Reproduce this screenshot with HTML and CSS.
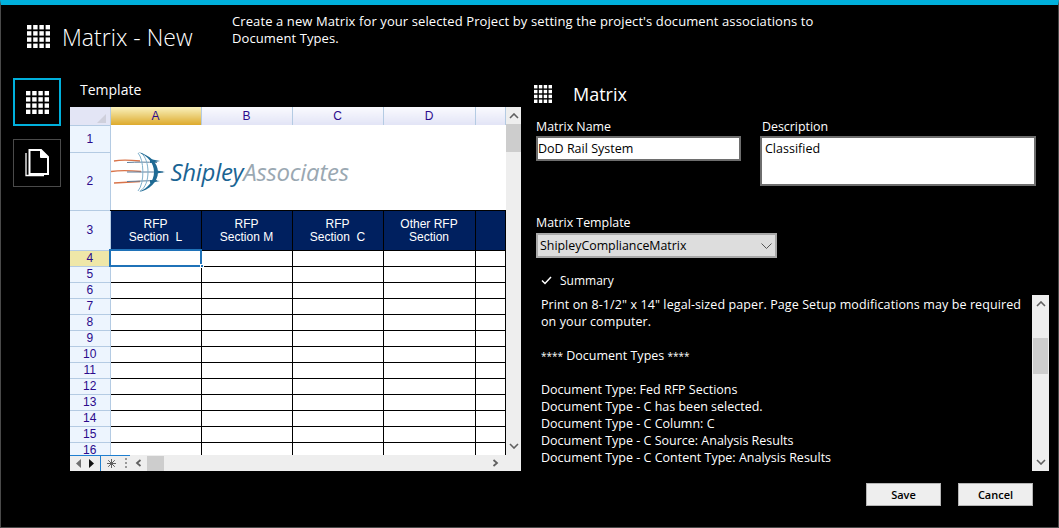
FILE: index.html
```html
<!DOCTYPE html>
<html lang="en">
<head>
    <meta charset="UTF-8">
    <title>Matrix - New</title>
    <link rel="stylesheet" href="styles.css">
</head>
<body>
    <svg class="defs" width="0" height="0">
        <symbol id="grid-icon" viewBox="0 0 23 23">
            <g fill="currentColor">
                <rect x="0" y="0" width="4.400" height="4.400"/><rect x="6.200" y="0" width="4.400" height="4.400"/><rect x="12.400" y="0" width="4.400" height="4.400"/><rect x="18.600" y="0" width="4.400" height="4.400"/>
                <rect x="0" y="6.200" width="4.400" height="4.400"/><rect x="6.200" y="6.200" width="4.400" height="4.400"/><rect x="12.400" y="6.200" width="4.400" height="4.400"/><rect x="18.600" y="6.200" width="4.400" height="4.400"/>
                <rect x="0" y="12.400" width="4.400" height="4.400"/><rect x="6.200" y="12.400" width="4.400" height="4.400"/><rect x="12.400" y="12.400" width="4.400" height="4.400"/><rect x="18.600" y="12.400" width="4.400" height="4.400"/>
                <rect x="0" y="18.600" width="4.400" height="4.400"/><rect x="6.200" y="18.600" width="4.400" height="4.400"/><rect x="12.400" y="18.600" width="4.400" height="4.400"/><rect x="18.600" y="18.600" width="4.400" height="4.400"/>
            </g>
        </symbol>
    </svg>

    <div class="window">
        <header class="top">
            <svg class="top-icon"><use href="#grid-icon"/></svg>
            <h1>Matrix - New</h1>
            <p>Create a new Matrix for your selected Project by setting the project's document associations to Document Types.</p>
        </header>

        <div class="main">
            <nav class="side">
                <div class="nav-btn active"><svg class="nav-icon"><use href="#grid-icon"/></svg></div>
                <div class="nav-btn">
                    <svg class="doc-icon" viewBox="0 0 24 28" fill="none" stroke="#fff">
                        <path d="M4.500 1h11.500l7 7v17h-18.500z" stroke-width="2"/>
                        <path d="M15.500 1v7.500h7.500z" fill="#fff" stroke-width="1"/>
                        <path d="M1 4v22.500h18" stroke-width="1.300"/>
                    </svg>
                </div>
            </nav>

            <section class="left">
                <h2 class="template-title">Template</h2>
                <div class="sheet">
                    <div class="sheet-body">
                        <table class="cells">
                            <colgroup>
                                <col class="c-head"><col class="c-col"><col class="c-col"><col class="c-col"><col class="c-col4"><col class="c-rest">
                            </colgroup>
                            <tr class="col-heads">
                                <th class="corner"><span class="corner-mark"></span></th>
                                <th class="selected">A</th><th>B</th><th>C</th><th>D</th><th></th>
                            </tr>
                            <tr class="r1"><td class="rh">1</td>
                                <td class="logo-cell" colspan="5" rowspan="2">
                                    <div class="logo">
                                        <svg class="globe" width="56" height="40" viewBox="0 0 56 40" fill="none">
                                            <path d="M3 9c8-1.500 16-1 26 0M0 19.500c10-1.500 20-1 30 0M3 31c8-.500 16-1 26-1.500" stroke="#d9744a" stroke-width="1.400"/>
                                            <path d="M16 10.500c10-.500 20-.500 30 0M16 20h36M16 29.500c10-.500 20-.500 30-1" stroke="#5f7f9c" stroke-width="1"/>
                                            <path d="M27 1c6 6 7 30 0 38" stroke="#7fb0cc" stroke-width="1"/>
                                            <path d="M30 1c9 6 10 32-1 38" stroke="#7fb0cc" stroke-width="1"/>
                                            <path d="M27 0c12 3 20 11 20 20c0 10-9 18-19 20c9-4 15-11 15-20c0-9-6-16-16-20z" fill="#1f6a94"/>
                                            <path d="M39 7l10 2-10 2zM43 18l11 2-11 2zM39 28l10 1-10 2z" fill="#1f6a94"/>
                                        </svg>
                                        <span class="logo-text"><span class="logo-blue">Shipley</span><span class="logo-gray">Associates</span></span>
                                    </div>
                                </td>
                            </tr>
                            <tr class="r2"><td class="rh">2</td></tr>
                            <tr class="r3"><td class="rh">3</td>
                                <td class="navy">RFP<br>Section&nbsp; L</td><td class="navy">RFP<br>Section M</td><td class="navy">RFP<br>Section&nbsp; C</td><td class="navy">Other RFP<br>Section</td><td class="navy"></td>
                            </tr>
                            <tr class="row"><td class="rh rh-sel">4</td><td class="cur"><span class="cur-handle"></span></td><td></td><td></td><td></td><td></td></tr>
                            <tr class="row"><td class="rh">5</td><td></td><td></td><td></td><td></td><td></td></tr>
                            <tr class="row"><td class="rh">6</td><td></td><td></td><td></td><td></td><td></td></tr>
                            <tr class="row"><td class="rh">7</td><td></td><td></td><td></td><td></td><td></td></tr>
                            <tr class="row"><td class="rh">8</td><td></td><td></td><td></td><td></td><td></td></tr>
                            <tr class="row"><td class="rh">9</td><td></td><td></td><td></td><td></td><td></td></tr>
                            <tr class="row"><td class="rh">10</td><td></td><td></td><td></td><td></td><td></td></tr>
                            <tr class="row"><td class="rh">11</td><td></td><td></td><td></td><td></td><td></td></tr>
                            <tr class="row"><td class="rh">12</td><td></td><td></td><td></td><td></td><td></td></tr>
                            <tr class="row"><td class="rh">13</td><td></td><td></td><td></td><td></td><td></td></tr>
                            <tr class="row"><td class="rh">14</td><td></td><td></td><td></td><td></td><td></td></tr>
                            <tr class="row"><td class="rh">15</td><td></td><td></td><td></td><td></td><td></td></tr>
                            <tr class="row"><td class="rh">16</td><td></td><td></td><td></td><td></td><td></td></tr>
                        </table>
                        <div class="v-scroll">
                            <svg class="arrow" viewBox="0 0 10 6"><path d="M1 5l4-4 4 4" fill="none" stroke="#606060" stroke-width="1.600"/></svg>
                            <div class="v-thumb"></div>
                            <svg class="arrow arrow-end" viewBox="0 0 10 6"><path d="M1 1l4 4 4-4" fill="none" stroke="#606060" stroke-width="1.600"/></svg>
                        </div>
                    </div>
                    <div class="sheet-foot">
                        <div class="tab-nav">
                            <svg width="6" height="9" viewBox="0 0 6 9"><path d="M5 0v9L0 4.500z" fill="#707070"/></svg>
                            <svg width="6" height="9" viewBox="0 0 6 9"><path d="M0 0v9l5-4.500z" fill="#111"/></svg>
                        </div>
                        <div class="tab-new">
                            <svg width="9" height="9" viewBox="0 0 9 9" stroke="#606060" stroke-width="1"><path d="M4.500 0v9M0 4.500h9M1.200 1.200l6.600 6.600M7.800 1.200L1.200 7.800"/></svg>
                        </div>
                        <span class="tab-dots"></span>
                        <svg class="h-arrow" width="7" height="8" viewBox="0 0 7 8"><path d="M5.500 1L2 4l3.500 3" fill="none" stroke="#606060" stroke-width="1.800"/></svg>
                        <div class="h-thumb"></div>
                        <svg class="h-arrow h-arrow-end" width="7" height="8" viewBox="0 0 7 8"><path d="M1.500 1L5 4 1.500 7" fill="none" stroke="#606060" stroke-width="1.800"/></svg>
                    </div>
                </div>
            </section>

            <section class="right">
                <div class="matrix-head">
                    <svg class="matrix-icon"><use href="#grid-icon"/></svg>
                    <h2>Matrix</h2>
                </div>
                <div class="form-row">
                    <div class="field-name">
                        <label>Matrix Name</label>
                        <div class="input">DoD Rail System</div>
                    </div>
                    <div class="field-desc">
                        <label>Description</label>
                        <div class="input area">Classified</div>
                    </div>
                </div>
                <label class="tpl-label">Matrix Template</label>
                <div class="select">
                    <span>ShipleyComplianceMatrix</span>
                    <svg width="11" height="6" viewBox="0 0 11 6"><path d="M.5.500l5 5 5-5" fill="none" stroke="#555" stroke-width="1"/></svg>
                </div>
                <div class="summary-head">
                    <svg width="11" height="9" viewBox="0 0 11 9"><path d="M1 4.500l3 3 6-6.500" fill="none" stroke="#fff" stroke-width="1.500"/></svg>
                    <span>Summary</span>
                </div>
                <div class="summary">
                    <div class="summary-text">
                        <p class="lead">Print on 8-1/2" x 14" legal-sized paper. Page Setup modifications may be required on your computer.</p>
                        <p><span class="stars">****</span> Document Types <span class="stars">****</span></p>
                        <p>Document Type: Fed RFP Sections<br>Document Type - C has been selected.<br>Document Type - C Column: C<br>Document Type - C Source: Analysis Results<br>Document Type - C Content Type: Analysis Results</p>
                    </div>
                    <div class="s-scroll">
                        <svg class="arrow" viewBox="0 0 10 6"><path d="M1 5l4-4 4 4" fill="none" stroke="#606060" stroke-width="1.600"/></svg>
                        <div class="s-thumb"></div>
                        <svg class="arrow arrow-end" viewBox="0 0 10 6"><path d="M1 1l4 4 4-4" fill="none" stroke="#606060" stroke-width="1.600"/></svg>
                    </div>
                </div>
                <div class="actions">
                    <button type="button" class="btn">Save</button>
                    <button type="button" class="btn">Cancel</button>
                </div>
            </section>
        </div>
    </div>
</body>
</html>
```
FILE: styles.css
```css
* {
    box-sizing: border-box;
}
html, body {
    margin: 0;
    padding: 0;
    height: 100%;
    background-color: #000;
}
body {
    font-family: "Open Sans", "Noto Sans", sans-serif;
    color: #fff;
    overflow: hidden;
}
.defs {
    display: block;
    height: 0;
}
.window {
    height: 528px;
    border: 1px solid #4a4a4a;
    border-top: 5px solid #00b0dc;
    background-color: #000;
}

/* header */
.top {
    display: flex;
    height: 68px;
    padding: 0 0 0 26px;
}
.top-icon {
    width: 23px;
    height: 23px;
    margin-top: 20px;
    color: #fff;
}
.top h1 {
    width: 170px;
    margin: 14px 0 0 12px;
    font-size: 23px;
    font-weight: 300;
    line-height: 36px;
}
.top p {
    width: 600px;
    margin: 8px 0 0 0;
    font-size: 13px;
    line-height: 17px;
    letter-spacing: 0.1px;
}

/* body columns */
.main {
    display: flex;
    height: 454px;
}
.side {
    width: 69px;
    padding: 5px 0 0 12px;
    flex-shrink: 0;
}
.nav-btn {
    display: flex;
    align-items: center;
    justify-content: center;
    width: 48px;
    height: 48px;
    margin-bottom: 13px;
    border: 1px solid #4a4a4a;
}
.nav-btn.active {
    border: 2px solid #00b0dc;
}
.nav-icon {
    width: 23px;
    height: 23px;
    color: #fff;
}
.doc-icon {
    width: 24px;
    height: 28px;
}

/* spreadsheet */
.left {
    width: 451px;
    flex-shrink: 0;
}
.template-title {
    height: 34px;
    margin: 0 0 0 10px;
    font-size: 14px;
    font-weight: 400;
    line-height: 34px;
}
.sheet {
    width: 451px;
    height: 364px;
    background-color: #fff;
}
.sheet-body {
    display: flex;
    height: 348px;
    overflow: hidden;
}
.cells {
    width: 435px;
    height: 348px;
    table-layout: fixed;
    border-collapse: collapse;
    color: #000;
    align-self: flex-start;
}
.c-head { width: 40px; }
.c-col { width: 91px; }
.c-col4 { width: 92px; }
.c-rest { width: 30px; }
.cells th {
    height: 18px;
    padding: 0;
    font-family: "Liberation Sans", Arial, sans-serif;
    font-size: 12px;
    font-weight: 400;
    color: #2b0a8c;
    border-right: 1px solid #b4cbe3;
    background: linear-gradient(#fafafe, #e2e4f6);
}
.cells th.corner {
    position: relative;
    background: #e3e5f5;
    border-bottom: 1px solid #b4cbe3;
}
.corner-mark {
    position: absolute;
    right: 4px;
    bottom: 2px;
    width: 0;
    height: 0;
    border-left: 9px solid transparent;
    border-bottom: 9px solid #cfd0dc;
}
.cells th.selected {
    background: linear-gradient(#f9f1bd, #ddaa2c);
}
.cells td {
    padding: 0;
    border: 1px solid #000;
}
.cells td.rh {
    font-family: "Liberation Sans", Arial, sans-serif;
    font-size: 12px;
    text-align: center;
    color: #2b0a8c;
    background-color: #edf5fe;
    border: none;
    border-bottom: 1px solid #b4cbe3;
    border-right: 1px solid #b4cbe3;
}
.cells td.rh-sel {
    background-color: #efe7a8;
}
.r1 { height: 27px; }
.r2 { height: 58px; }
.r3 { height: 40px; }
.row { height: 16px; }
.cells td.logo-cell {
    border: none;
    border-bottom: 1px solid #000;
    background-color: #fff;
}
.logo {
    display: flex;
    align-items: center;
    padding: 9px 0 0 0;
}
.logo-text {
    margin-left: 4px;
    font-family: "Open Sans", sans-serif;
    font-style: italic;
    font-size: 24px;
    letter-spacing: -0.3px;
}
.logo-blue { color: #1a6493; }
.logo-gray { color: #9aa8b2; }
.cells td.navy {
    padding-top: 1px;
    font-family: "Liberation Sans", Arial, sans-serif;
    font-size: 12px;
    line-height: 13px;
    text-align: center;
    color: #fff;
    background-color: #00205f;
}
.cells td.cur {
    position: relative;
    outline: 2px solid #1f72b8;
    outline-offset: -1px;
}
.cur-handle {
    position: absolute;
    right: -3px;
    bottom: -2px;
    width: 4px;
    height: 4px;
    background-color: #1f72b8;
    border: 1px solid #fff;
}
.v-scroll, .s-scroll {
    display: flex;
    flex-direction: column;
    align-items: center;
    width: 16px;
    height: 100%;
    background-color: #eeeeee;
    flex-shrink: 0;
}
.arrow {
    width: 10px;
    height: 6px;
    flex-shrink: 0;
    margin-top: 6px;
}
.arrow-end {
    margin-top: auto;
    margin-bottom: 6px;
}
.v-thumb {
    width: 15px;
    height: 28px;
    margin-top: 5px;
    background-color: #cdcdcd;
}
.sheet-foot {
    display: flex;
    align-items: center;
    height: 16px;
    background-color: #eeeeee;
}
.tab-nav {
    display: flex;
    align-items: center;
    justify-content: center;
    gap: 7px;
    width: 31px;
    height: 16px;
    border-top: 1px solid #1f7fd0;
    border-right: 1px solid #1f7fd0;
}
.tab-new {
    display: flex;
    align-items: center;
    justify-content: center;
    width: 29px;
    height: 16px;
    padding-right: 9px;
    background: linear-gradient(#1f7fd0 1px, #eeeeee 1px);
}
.tab-dots {
    width: 2px;
    height: 10px;
    margin-left: -5px;
    background: repeating-linear-gradient(#999 0 2px, transparent 2px 4px);
}
.h-arrow {
    margin-left: 8px;
}
.h-thumb {
    width: 17px;
    height: 15px;
    margin-left: 5px;
    background-color: #cdcdcd;
}
.h-arrow-end {
    margin-left: auto;
    margin-right: 22px;
}

/* right column */
.right {
    flex: 1;
    padding-left: 15px;
}
.matrix-head {
    display: flex;
    align-items: center;
    height: 30px;
    margin-top: 6px;
}
.matrix-icon {
    width: 18px;
    height: 18px;
    color: #fff;
    margin-left: -2px;
}
.matrix-head h2 {
    margin: 0 0 0 21px;
    font-size: 18px;
    font-weight: 400;
}
label {
    display: block;
    font-size: 12.400px;
    line-height: 18px;
}
.form-row {
    display: flex;
    margin-top: 9px;
}
.field-name {
    width: 224px;
}
.field-desc label {
    margin-left: 2px;
}
.input {
    width: 205px;
    height: 25px;
    padding: 0;
    font-size: 12.500px;
    line-height: 21px;
    color: #000;
    background-color: #fff;
    border: 2px solid #6e6e6e;
}
.input.area {
    width: 276px;
    height: 50px;
    padding-left: 3px;
}
.tpl-label {
    margin-top: 28px;
}
.select {
    display: flex;
    align-items: center;
    justify-content: space-between;
    width: 241px;
    height: 25px;
    margin-top: 1px;
    padding: 0 3px 0 2px;
    font-size: 12.400px;
    color: #000;
    background-color: #dddddd;
    border: 2px solid #a8a8a8;
}
.summary-head {
    display: flex;
    align-items: center;
    height: 18px;
    margin-top: 13px;
    padding-left: 5px;
    font-size: 12px;
}
.summary-head span {
    margin-left: 8px;
}
.summary {
    display: flex;
    justify-content: space-between;
    width: 513px;
    height: 176px;
    margin-top: 6px;
}
.summary-text {
    width: 490px;
    padding: 1px 0 0 5px;
    font-size: 12.500px;
    line-height: 17px;
}
.summary-text p {
    margin: 0 0 17px 0;
}
.summary-text .lead {
    letter-spacing: 0.1px;
}
.stars {
    font-size: 10px;
    line-height: 0;
}
.s-scroll {
    width: 17px;
}
.s-thumb {
    width: 15px;
    height: 36px;
    margin-top: 31px;
    background-color: #cdcdcd;
}
.actions {
    display: flex;
    justify-content: flex-end;
    gap: 17px;
    width: 497px;
    margin-top: 12px;
}
.btn {
    width: 75px;
    height: 23px;
    padding: 0;
    font-family: "Open Sans", sans-serif;
    font-size: 11px;
    font-weight: 600;
    color: #000;
    background-color: #eeeeee;
    border: 1px solid #b5b5b5;
}
```
